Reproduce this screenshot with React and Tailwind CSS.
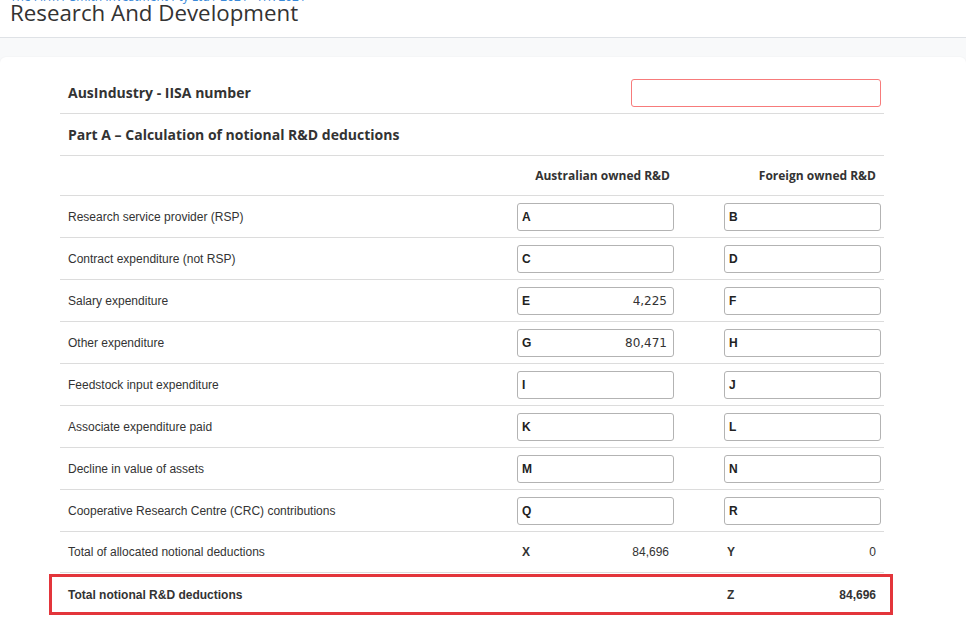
import React from 'react';

const rows = [
  { label: 'Research service provider (RSP)', a: 'A', b: 'B' },
  { label: 'Contract expenditure (not RSP)', a: 'C', b: 'D' },
  { label: 'Salary expenditure', a: 'E', av: '4,225', b: 'F' },
  { label: 'Other expenditure', a: 'G', av: '80,471', b: 'H' },
  { label: 'Feedstock input expenditure', a: 'I', b: 'J' },
  { label: 'Associate expenditure paid', a: 'K', b: 'L' },
  { label: 'Decline in value of assets', a: 'M', b: 'N' },
  { label: 'Cooperative Research Centre (CRC) contributions', a: 'Q', b: 'R' },
];

function Field({ letter, value }) {
  return (
    <div className="w-[157px] h-[28px] border border-[#b3b3b3] rounded-[3px] bg-white flex items-center justify-between pl-[4px] pr-[6px]">
      <span className="text-[12px] font-bold text-[#222] font-['Liberation_Sans',Arial,sans-serif]">{letter}</span>
      <span className="text-[12px] text-[#333] font-['DejaVu_Sans',Verdana,sans-serif]">{value}</span>
    </div>
  );
}

export default function App() {
  return (
    <div className="min-h-screen bg-[#f8f9fa] font-['Open_Sans',sans-serif] text-[#333]">
      <div className="bg-white h-[38px] border-b border-[#dfe2e6] overflow-hidden pl-[10px]">
        <div className="mt-[-9px] h-[12px] leading-[12px] text-[12px] text-[#3b8ad9] whitespace-nowrap">
          The Firm / Smith Investment Pty Ltd / 2021 - ITR 2021
        </div>
        <h1 className="mt-[-2px] text-[22.3px] leading-[24px] font-normal text-[#333]">Research And Development</h1>
      </div>

      <div className="mt-[19px] bg-white rounded-t-md shadow-[0_0_2px_rgba(0,0,0,0.06)] pt-[15px] pb-[10px]">
        <div className="ml-[60px] w-[824px]">
          <div className="h-[42px] flex items-center justify-between pl-2 pr-[3px] border-b border-[#dcdcdc]">
            <span className="text-[14px] font-bold">AusIndustry - IISA number</span>
            <div className="w-[250px] h-[28px] border border-[#f77b7b] rounded-[3px]" />
          </div>
          <div className="h-[42px] flex items-center pl-2 border-b border-[#dcdcdc]">
            <span className="text-[14px] font-bold">Part A – Calculation of notional R&amp;D deductions</span>
          </div>
          <div className="h-[40px] flex items-center border-b border-[#dcdcdc] text-[12px] font-bold">
            <div className="flex-1" />
            <div className="w-[157px] text-right pr-[4px]">Australian owned R&amp;D</div>
            <div className="w-[50px]" />
            <div className="w-[157px] text-right pr-[5px] mr-[3px]">Foreign owned R&amp;D</div>
          </div>

          {rows.map((r) => (
            <div key={r.a} className="h-[42px] flex items-center border-b border-[#dcdcdc] font-['Liberation_Sans',Arial,sans-serif]">
              <div className="flex-1 pl-2 text-[12px] text-[#333]">{r.label}</div>
              <Field letter={r.a} value={r.av} />
              <div className="w-[50px]" />
              <div className="mr-[3px]">
                <Field letter={r.b} value={r.bv} />
              </div>
            </div>
          ))}

          <div className="h-[41px] flex items-center border-b border-[#dcdcdc] font-['Liberation_Sans',Arial,sans-serif] text-[12px]">
            <div className="flex-1 pl-2">Total of allocated notional deductions</div>
            <div className="w-[157px] flex justify-between pl-[5px] pr-[5px]">
              <span className="font-bold">X</span>
              <span>84,696</span>
            </div>
            <div className="w-[50px]" />
            <div className="w-[157px] flex justify-between pl-[3px] pr-[5px] mr-[3px]">
              <span className="font-bold">Y</span>
              <span>0</span>
            </div>
          </div>

          <div className="-ml-[11px] -mr-[9px] mt-px h-[41px] border-[3px] border-[#e3353b] flex items-center pl-[16px] pr-[6px] font-['Liberation_Sans',Arial,sans-serif] text-[12px]">
            <div className="flex-1 font-bold">Total notional R&amp;D deductions</div>
            <div className="w-[157px]" />
            <div className="w-[50px]" />
            <div className="w-[157px] flex justify-between pl-[3px] pr-[5px] mr-[3px]">
              <span className="font-bold">Z</span>
              <span className="font-bold">84,696</span>
            </div>
          </div>
        </div>
      </div>
    </div>
  );
}
